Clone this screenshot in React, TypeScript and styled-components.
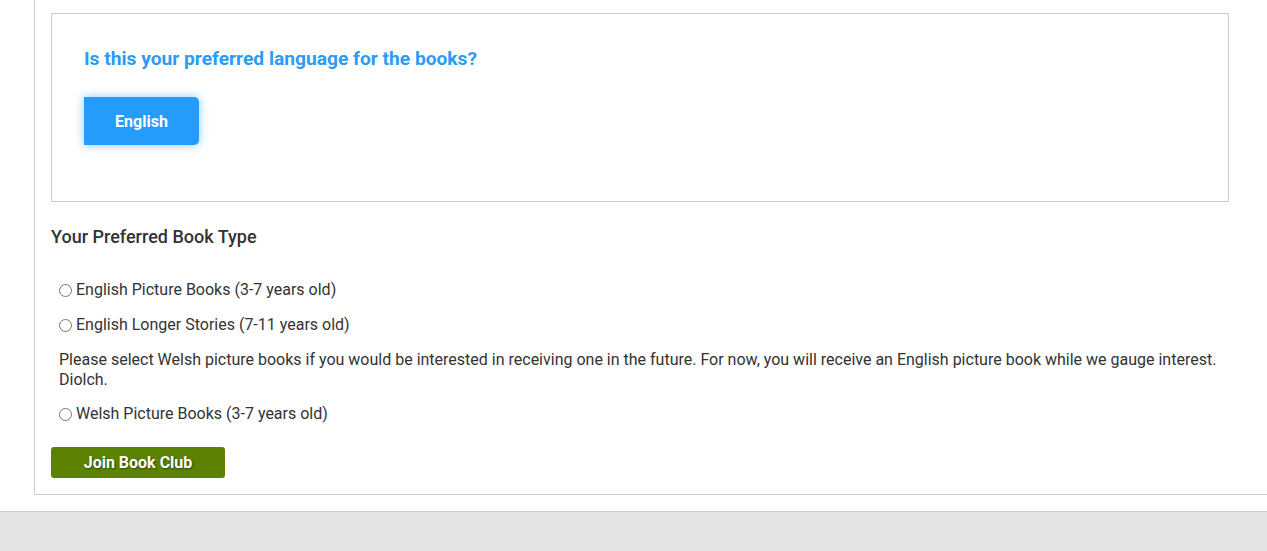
import styled, { createGlobalStyle } from 'styled-components';

const GlobalStyle = createGlobalStyle`
  html, body {
    margin: 0;
    padding: 0;
    background: #fff;
    font-family: Roboto, 'Liberation Sans', Arial, sans-serif;
    color: #333;
  }
`;

const Page = styled.div`
  display: flex;
  flex-direction: column;
  min-height: 551px;
`;

const Main = styled.div`
  margin-left: 34px;
  border-left: 1px solid #ccc;
  border-bottom: 1px solid #ccc;
  padding: 13px 38px 16px 16px;
`;

const LanguageBox = styled.div`
  border: 1px solid #ccc;
  padding: 34px 32px 56px;
`;

const Question = styled.h3`
  margin: 0 0 27px;
  font-size: 19.2px;
  line-height: 22px;
  font-weight: 700;
  color: #2a9bf6;
`;

const LangButton = styled.button`
  display: block;
  width: 115px;
  height: 48px;
  border: none;
  border-radius: 0 5px 5px 0;
  background: #259bfc;
  color: #fff;
  font-family: inherit;
  font-size: 16px;
  font-weight: 700;
  box-shadow: 0 0 10px rgba(37, 155, 252, 0.55);
  cursor: pointer;
`;

const SectionTitle = styled.h4`
  margin: 24px 0 0;
  font-size: 18px;
  line-height: 22px;
  font-weight: 500;
  color: #333;
`;

const Options = styled.div`
  display: flex;
  flex-direction: column;
  gap: 15px;
  margin-top: 32px;
  padding-left: 8px;
`;

const Option = styled.label`
  display: flex;
  align-items: center;
  font-size: 16px;
  line-height: 20px;
  color: #333;

  input {
    margin: 0 4px 0 0;
    width: 13px;
    height: 13px;
  }
`;

const Note = styled.p`
  margin: 0 0 -1px;
  font-size: 16px;
  line-height: 20px;
  color: #333;
`;

const JoinButton = styled.button`
  display: block;
  margin-top: 23px;
  width: 174px;
  height: 31px;
  border: none;
  border-radius: 3px;
  background: #5b8200;
  color: #fff;
  font-family: inherit;
  font-size: 16px;
  font-weight: 700;
  text-shadow: 1px 1px 2px rgba(0, 0, 0, 0.45);
  cursor: pointer;
`;

const Footer = styled.div`
  margin-top: 16px;
  flex: 1;
  background: #e4e4e4;
  border-top: 1px solid #ccc;
`;

const App = () => {
  const types = [
    'English Picture Books (3-7 years old)',
    'English Longer Stories (7-11 years old)',
  ];
  return (
    <>
      <GlobalStyle />
      <Page>
        <Main>
          <LanguageBox>
            <Question>Is this your preferred language for the books?</Question>
            <LangButton>English</LangButton>
          </LanguageBox>
          <SectionTitle>Your Preferred Book Type</SectionTitle>
          <Options>
            {types.map((t) => (
              <Option key={t}>
                <input type='radio' name='booktype' />
                {t}
              </Option>
            ))}
            <Note>
              Please select Welsh picture books if you would be interested in receiving one in the
              future. For now, you will receive an English picture book while we gauge interest.
              Diolch.
            </Note>
            <Option>
              <input type='radio' name='booktype' />
              Welsh Picture Books (3-7 years old)
            </Option>
          </Options>
          <JoinButton>Join Book Club</JoinButton>
        </Main>
        <Footer />
      </Page>
    </>
  );
};

export default App;
